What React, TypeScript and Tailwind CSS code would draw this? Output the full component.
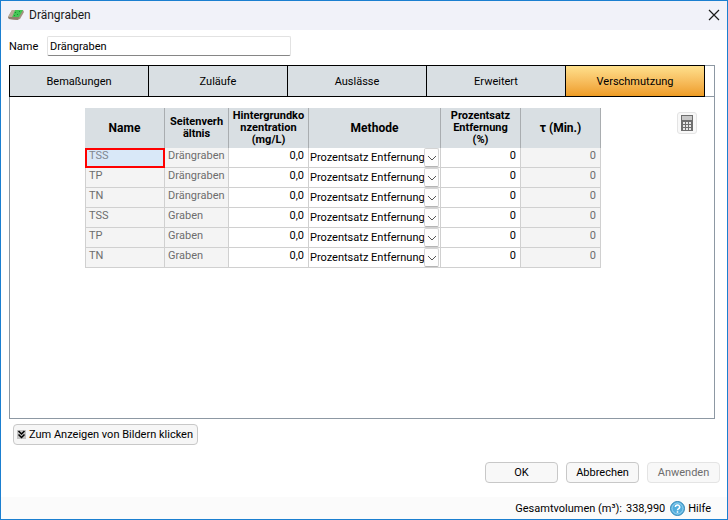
import React from "react";

const tabs = ["Bemaßungen", "Zuläufe", "Auslässe", "Erweitert", "Verschmutzung"];

const rows = [
  { name: "TSS", side: "Drängraben" },
  { name: "TP", side: "Drängraben" },
  { name: "TN", side: "Drängraben" },
  { name: "TSS", side: "Graben" },
  { name: "TP", side: "Graben" },
  { name: "TN", side: "Graben" },
];

const TitleBar = () => {
  return (
    <header className="flex h-[29px] items-center bg-[#f1f2f9] pb-[2px] pl-[7px] pr-[5px]">
      <svg viewBox="0 0 16 12" className="h-[12px] w-[16px]">
        <path d="M0 8 4 1 15 1 16 3 12 10 9 11 1 10Z" fill="#a3937f" />
        <path d="M4 8 7 1 15 1 11 8Z" fill="#43c553" />
        <path d="M0 8 4 1 7 1 4 8Z" fill="#b9aa97" />
        <path d="M0 8 11 8 10 11 1 10Z" fill="#8f7f6d" />
        <path d="M7 3h1v1H7zM11 2h1v1h-1zM9 5h1v1H9zM6 6h1v1H6z" fill="#1f8a35" />
      </svg>
      <h1 className="ml-[5px] text-[12px] leading-[16px] text-[#1a1a1a]">Drängraben</h1>
      <button type="button" aria-label="Schließen" className="ml-auto flex h-[16px] w-[16px] items-center justify-center">
        <svg viewBox="0 0 12 12" className="h-[12px] w-[12px]">
          <path d="M1 1 11 11M11 1 1 11" stroke="#1a1a1a" strokeWidth="1.2" fill="none" />
        </svg>
      </button>
    </header>
  );
};

const Tabs = () => {
  return (
    <div className="-mb-px border-b border-[#8d98a3]">
      <div role="tablist" className="-mb-px -ml-px -mt-px mr-[9px] flex border border-black">
        {tabs.map((tab, i) => (
          <button
            key={tab}
            type="button"
            role="tab"
            aria-selected={i === 4}
            className={
              i === 4
                ? "h-[30px] flex-1 bg-linear-to-b from-[#fee08c] to-[#ee9c22]"
                : "h-[30px] flex-1 border-r border-black bg-[#d9dfe3]"
            }
          >
            {tab}
          </button>
        ))}
      </div>
    </div>
  );
};

const MethodCell = ({ label }: { label: string }) => {
  return (
    <div className="relative h-[19px]">
      <select
        aria-label={label}
        className="h-[19px] w-full appearance-none bg-white pl-px text-[11px] text-black"
      >
        <option>Prozentsatz Entfernung</option>
      </select>
      <span className="pointer-events-none absolute right-px top-0 flex h-[19px] w-[15px] items-center justify-center rounded-[2px] border border-[#d4d4d4] border-b-[#b4b4b4] bg-[#fdfdfd]">
        <svg viewBox="0 0 10 6" className="h-[6px] w-[10px]">
          <path d="M1 1 5 5 9 1" stroke="#555" fill="none" />
        </svg>
      </span>
    </div>
  );
};

const PollutionTable = () => {
  return (
    <table className="w-[516px] table-fixed border-separate border-spacing-0">
      <colgroup>
        <col className="w-[80px]" />
        <col className="w-[64px]" />
        <col className="w-[80px]" />
        <col className="w-[132px]" />
        <col className="w-[80px]" />
        <col className="w-[80px]" />
      </colgroup>
      <thead>
        <tr className="h-[40px] bg-[#d9dfe3] text-[12px] leading-[12px] *:border-r *:border-[#a9adb0] *:p-0 *:font-bold">
          <th>Name</th>
          <th className="text-[11px]">Seitenverh<br />ältnis</th>
          <th className="text-[11px]">Hintergrundko<br />nzentration<br />(mg/L)</th>
          <th>Methode</th>
          <th className="text-[11px]">Prozentsatz<br />Entfernung<br />(%)</th>
          <th>τ (Min.)</th>
        </tr>
      </thead>
      <tbody>
        {rows.map((row, i) => (
          <tr
            key={i}
            className="h-[20px] align-top leading-[15px] *:border-r *:border-b *:border-[#d0d0d0] *:p-0"
          >
            <td
              className={
                i === 0
                  ? "border-l bg-[#d9e8f8] text-[#7f8790] outline-2 -outline-offset-2 outline-[#f00]"
                  : "border-l bg-[#f4f4f4] text-[#6d6d6d]"
              }
            >
              <span className="pl-[3px]">{row.name}</span>
            </td>
            <td className="bg-[#f4f4f4] text-[#6d6d6d]"><span className="pl-[3px]">{row.side}</span></td>
            <td className="bg-white text-right"><span className="pr-[4px]">0,0</span></td>
            <td><MethodCell label={`Methode ${row.name} ${row.side}`} /></td>
            <td className="bg-white text-right"><span className="pr-[4px]">0</span></td>
            <td className="bg-[#f4f4f4] text-right text-[#6d6d6d]"><span className="pr-[4px]">0</span></td>
          </tr>
        ))}
      </tbody>
    </table>
  );
};

const App = () => {
  return (
    <div className="flex min-h-screen flex-col border border-[#1b7fd0] bg-white font-['Roboto','Liberation_Sans',sans-serif] text-[11px] leading-[15px] text-black">
      <TitleBar />

      <main className="flex flex-1 flex-col pl-[8px] pr-[12px]">
        <div className="mt-[6px] flex h-[20px] items-center">
          <label htmlFor="name" className="w-[38px]">Name</label>
          <input
            id="name"
            defaultValue="Drängraben"
            className="h-[20px] w-[244px] rounded-[2px] border border-[#e2e2e2] border-b-[#868686] px-[2px]"
          />
        </div>

        {/* Tab panel */}
        <section className="mt-[9px] flex flex-1 flex-col border border-[#8d98a3]">
          <Tabs />
          <div className="flex items-start pl-[75px] pr-[17px] pt-[12px]">
            <PollutionTable />
            <button
              type="button"
              aria-label="Berechnen"
              className="ml-auto mt-[4px] flex h-[22px] w-[20px] items-center justify-center rounded-[3px] border border-[#e4e4e4] bg-[#f8f8f8]"
            >
              <svg viewBox="0 0 12 16" className="h-[16px] w-[12px]">
                <path d="M0 0h12v16H0z" fill="#6e6e6e" />
                <path d="M1 1h10v4H1z" fill="#c8c8c8" />
                <path d="M2 7h2v2H2zM5 7h2v2H5zM8 7h2v2H8zM2 10h2v2H2zM5 10h2v2H5zM8 10h2v2H8zM2 13h2v2H2zM5 13h2v2H5zM8 13h2v2H8z" fill="#e6e6e6" />
              </svg>
            </button>
          </div>
        </section>

        <button
          type="button"
          className="ml-[4px] mt-[5px] flex h-[21px] w-[185px] items-center whitespace-nowrap rounded-[4px] border border-[#c8c8c8] bg-[#f6f6f6] pl-[3px]"
        >
          <svg viewBox="0 0 9 9" className="h-[9px] w-[9px]">
            <path d="M0 0h9v9H0z" fill="#c4c4c4" />
            <path d="M1.500 1 4.500 4 7.500 1M1.500 4.500 4.500 7.500 7.500 4.500" stroke="#000" strokeWidth="1.500" fill="none" />
          </svg>
          <span className="ml-[3px]">Zum Anzeigen von Bildern klicken</span>
        </button>

        {/* Dialog buttons */}
        <div className="-mr-[5px] mb-[14px] mt-[17px] flex justify-end gap-[8px]">
          <button type="button" className="h-[21px] w-[73px] rounded-[4px] border border-[#c8c8c8] bg-[#f8f8f8]">OK</button>
          <button type="button" className="h-[21px] w-[73px] rounded-[4px] border border-[#c8c8c8] bg-[#f8f8f8]">Abbrechen</button>
          <button type="button" disabled className="h-[21px] w-[73px] rounded-[4px] border border-[#e4e4e4] bg-[#f8f8f8] text-[#6d6d6d]">Anwenden</button>
        </div>
      </main>

      <footer className="flex h-[22px] items-center justify-end bg-[#fbfbfb] pr-[16px]">
        <span>Gesamtvolumen (m³):</span>
        <span className="ml-[4px]">338,990</span>
        <a href="#hilfe" className="ml-[5px] flex items-center gap-[3px]">
          <svg viewBox="0 0 15 15" className="h-[15px] w-[15px]">
            <circle cx="7.500" cy="7.500" r="7" fill="#52aede" stroke="#3387b5" />
            <circle cx="7.500" cy="7.500" r="5.500" fill="none" stroke="#a9daf2" strokeWidth="0.800" />
            <path d="M5.300 6a2.200 2 0 1 1 3.200 1.800Q7.500 8.300 7.500 9.300M7.500 10.300v1.500" stroke="#fff" strokeWidth="1.500" fill="none" />
          </svg>
          Hilfe
        </a>
      </footer>
    </div>
  );
};

export default App;
